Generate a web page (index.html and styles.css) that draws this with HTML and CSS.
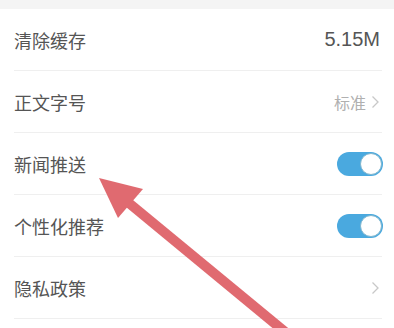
FILE: index.html
```html
<!DOCTYPE html>
<html>
<head>
<meta charset="utf-8">
<link rel="stylesheet" href="styles.css">
</head>
<body>
<div class="page">
  <div class="band"></div>
  <div class="list">
    <div class="row"><span class="label">清除缓存</span><span class="value">5.15M</span></div>
    <div class="row"><span class="label">正文字号</span><span class="right"><span class="sub">标准</span><svg class="chev" width="9" height="14" viewBox="0 0 9 14"><path d="M1.5 1.5 L7 7 L1.5 12.5" fill="none" stroke="#c8c8c8" stroke-width="1.3"/></svg></span></div>
    <div class="row"><span class="label">新闻推送</span><span class="toggle"><span class="knob"></span></span></div>
    <div class="row"><span class="label">个性化推荐</span><span class="toggle"><span class="knob"></span></span></div>
    <div class="row"><span class="label">隐私政策</span><span class="right"><svg class="chev" width="9" height="14" viewBox="0 0 9 14"><path d="M1.5 1.5 L7 7 L1.5 12.5" fill="none" stroke="#c8c8c8" stroke-width="1.3"/></svg></span></div>
    <div class="row"><span class="label"></span></div>
  </div>
  <svg class="arrow" width="394" height="328" viewBox="0 0 394 328">
    <line x1="124" y1="199" x2="290" y2="336" stroke="#e06a70" stroke-width="10"/>
    <polygon points="99,178 143,189 118,218" fill="#e06a70"/>
  </svg>
</div>
</body>
</html>
```
FILE: styles.css
```css
html, body { margin: 0; padding: 0; background: #fff; }
.page {
  position: relative;
  width: 394px;
  height: 328px;
  overflow: hidden;
  font-family: "Noto Sans CJK SC", "Noto Sans", sans-serif;
}
.band { height: 9px; background: #f4f4f4; }
.list { padding: 0 12px 0 14px; }
.row {
  height: 61px;
  border-bottom: 1px solid #efefef;
  display: flex;
  align-items: center;
  justify-content: space-between;
}
.label { font-size: 18px; color: #555; }
.value { font-family: "Liberation Sans", Arial, sans-serif; font-size: 20px; color: #555; margin-right: 2px; }
.right { display: flex; align-items: center; gap: 5px; margin-right: 2px; }
.sub { font-size: 16px; color: #b0b0b0; }
.chev { display: block; }
.toggle {
  width: 46px;
  height: 24px;
  border-radius: 12px;
  background: #4aa9df;
  position: relative;
  margin-right: -1px;
}
.knob {
  position: absolute;
  right: 1px;
  top: 1px;
  width: 20px;
  height: 20px;
  border-radius: 50%;
  background: #fff;
  border: 1px solid #7fb6cf;
}
.arrow { position: absolute; left: 0; top: 0; }
```
